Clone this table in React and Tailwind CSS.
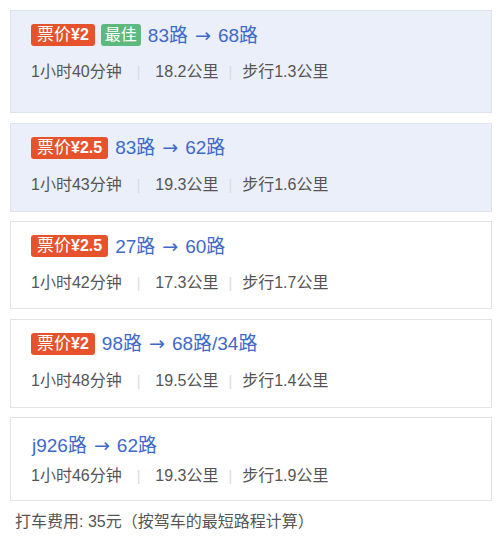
import React from 'react';

const routes = [
  { price: '2', best: true, from: '83路', to: '68路', time: '1小时40分钟', dist: '18.2公里', walk: '步行1.3公里', hl: true, h: 'h-[103px]' },
  { price: '2.5', from: '83路', to: '62路', time: '1小时43分钟', dist: '19.3公里', walk: '步行1.6公里', hl: true, h: 'h-[89px]' },
  { price: '2.5', from: '27路', to: '60路', time: '1小时42分钟', dist: '17.3公里', walk: '步行1.7公里', h: 'h-[88px]' },
  { price: '2', from: '98路', to: '68路/34路', time: '1小时48分钟', dist: '19.5公里', walk: '步行1.4公里', h: 'h-[89px]' },
  { from: 'j926路', to: '62路', time: '1小时46分钟', dist: '19.3公里', walk: '步行1.9公里', h: 'h-[84px]' },
];

function Sep({ className }) {
  return <span className={`${className} text-[#d9d9d9] text-[14px]`}>|</span>;
}

function RouteCard({ r }) {
  return (
    <div
      className={`${r.h} border pl-[20px] pr-4 ${
        r.hl ? 'bg-[#eaeff9] border-[#dce2ef]' : 'bg-white border-[#e3e3e3]'
      } ${r.price ? 'pt-[13px]' : 'pt-[16px]'}`}
    >
      <div className="flex items-center h-[22px] gap-[6px]">
        {r.price && (
          <span className="h-[22px] px-[6px] rounded-[3px] bg-[#e6522b] text-white text-[17px] leading-[22px]">
            票价<span className="font-bold text-[16px]">¥{r.price}</span>
          </span>
        )}
        {r.best && (
          <span className="h-[22px] px-[4px] rounded-[3px] bg-[#5db97d] text-white text-[16px] leading-[22px]">
            最佳
          </span>
        )}
        <span className="text-[19px] leading-[22px] text-[#3e69cb] ml-[1px]">
          {r.from}
          <span className="mx-[7px]" style={{ fontFamily: '"DejaVu Sans", sans-serif' }}>→</span>
          {r.to}
        </span>
      </div>
      <div className={`flex items-center text-[16px] leading-[24px] text-[#555] ${r.price ? 'mt-[14px]' : 'mt-[8px]'}`}>
        <span>{r.time}</span>
        <Sep className="mx-[15px]" />
        <span>{r.dist}</span>
        <Sep className="mx-[10px]" />
        <span>{r.walk}</span>
      </div>
    </div>
  );
}

export default function App() {
  return (
    <div
      className="w-[500px] h-[541px] bg-white pt-[10px] pl-[10px] pr-[8px] overflow-hidden"
      style={{ fontFamily: '"Liberation Sans", "Noto Sans CJK SC", sans-serif' }}
    >
      <div className="flex flex-col gap-[9.5px]">
        {routes.map((r, i) => (
          <RouteCard key={i} r={r} />
        ))}
      </div>
      <p className="mt-[9px] ml-[5px] text-[16px] leading-[24px] text-[#555]">
        打车费用: 35元（按驾车的最短路程计算）
      </p>
    </div>
  );
}
